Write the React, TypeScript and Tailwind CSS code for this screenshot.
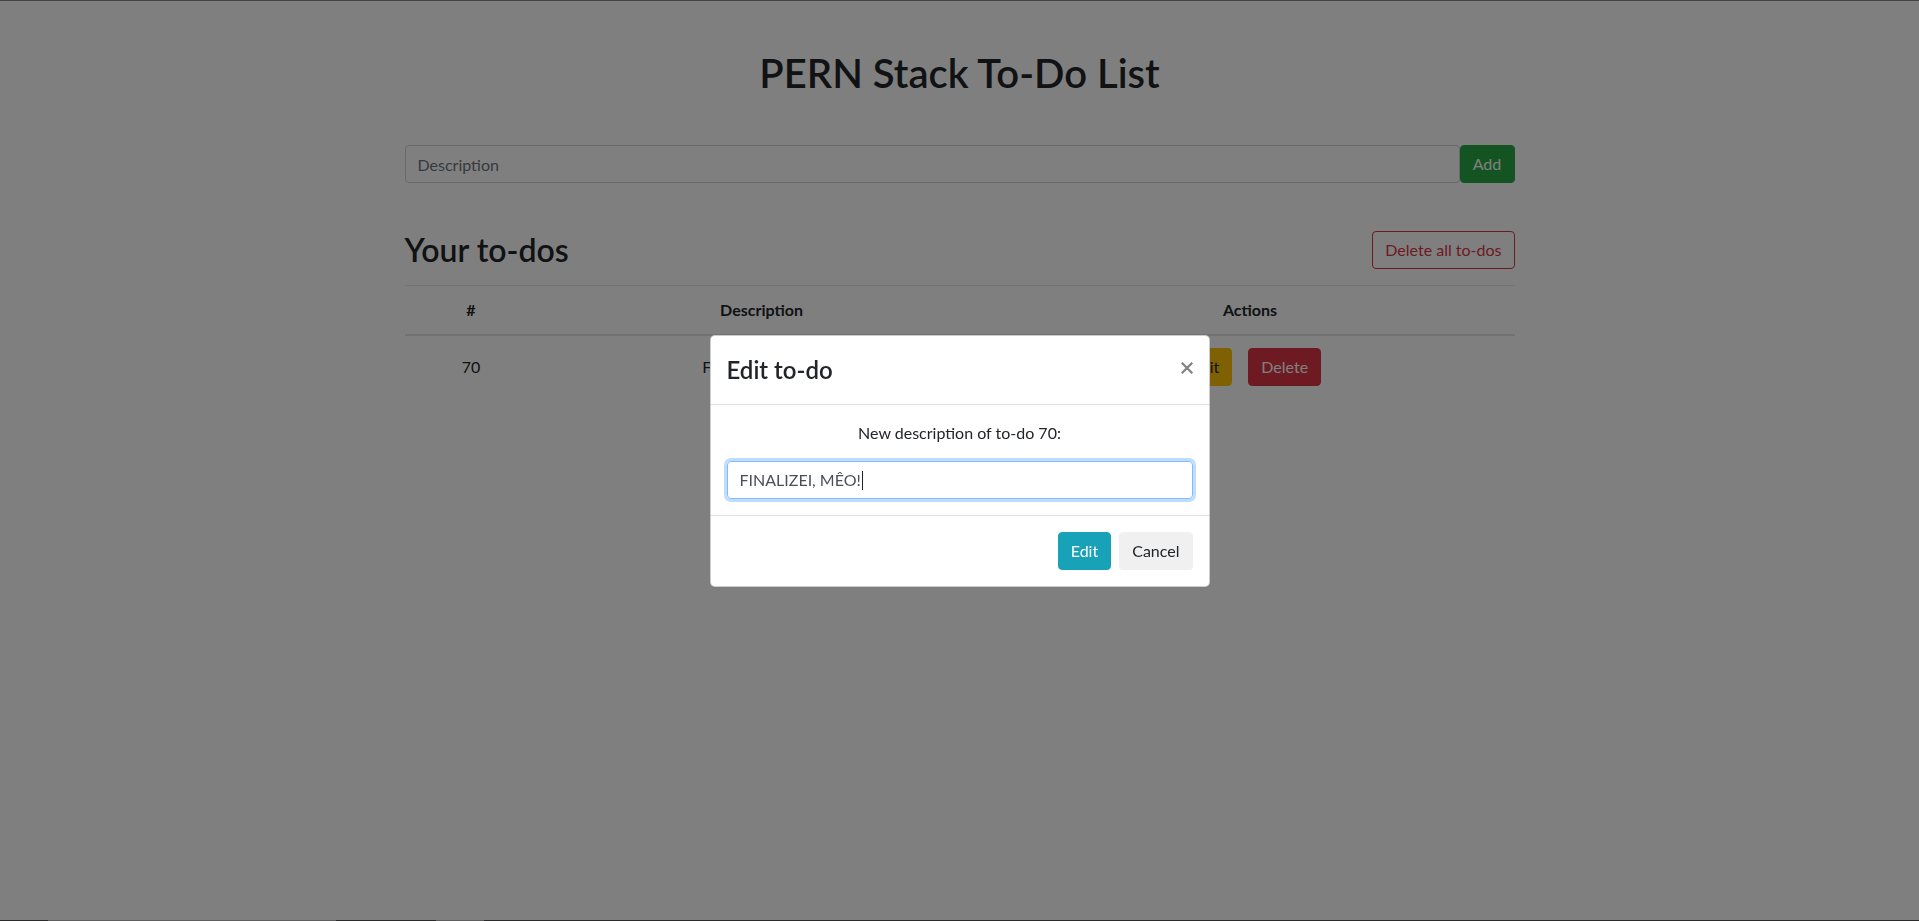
import React from "react";

const btn = "h-[38px] px-3 rounded-[4px] text-[16px] leading-[24px] border";

export default function App() {
  return (
    <div className="relative min-h-screen w-full bg-white text-[#212529] font-['Lato','Noto_Sans',sans-serif]">
      <div className="w-[1110px] mx-auto">
        <h1 className="pt-[49px] text-center text-[40px] leading-[48px] font-semibold">PERN Stack To-Do List</h1>
        <form className="flex mt-[48px]">
          <input
            className="flex-1 h-[38px] border border-[#ced4da] rounded-[4px] px-3 text-[16px] text-[#495057] placeholder:text-[#6c757d] outline-none"
            placeholder="Description"
          />
          <button type="button" className={`${btn} w-[55px] bg-[#28a745] border-[#28a745] text-white`}>Add</button>
        </form>

        <div className="flex justify-between items-center mt-[48px]">
          <h2 className="text-[32px] leading-[38px] font-semibold">Your to-dos</h2>
          <button type="button" className={`${btn} border-[#dc3545] text-[#dc3545] bg-transparent`}>Delete all to-dos</button>
        </div>

        <div className="mt-[16px] text-[16px]">
          <div className="grid grid-cols-[133px_448px_529px] border-t border-[#dee2e6] border-b-2 font-bold">
            <div className="py-3 leading-[24px] text-center">#</div>
            <div className="py-3 leading-[24px] text-center">Description</div>
            <div className="py-3 leading-[24px] text-center">Actions</div>
          </div>
          <div className="grid grid-cols-[133px_448px_529px] items-center">
            <div className="py-3 text-center leading-[24px]">70</div>
            <div className="py-3 text-center leading-[24px]">Fazer os projetos</div>
            <div className="py-3 flex justify-center gap-4">
              <button type="button" className={`${btn} bg-[#ffc107] border-[#ffc107] text-[#212529]`}>Edit</button>
              <button type="button" className={`${btn} bg-[#dc3545] border-[#dc3545] text-white`}>Delete</button>
            </div>
          </div>
        </div>
      </div>

      {/* modal backdrop + dialog */}
      <div className="fixed inset-0 bg-black/50 border-t border-[#454545] flex items-center justify-center">
        <div className="w-[500px] bg-white rounded-[5px] border border-black/20 flex flex-col">
          <div className="flex items-start px-4 py-4 border-b border-[#dee2e6]">
            <h4 className="text-[24px] leading-[36px] font-semibold">Edit to-do</h4>
            <button type="button" className="ml-auto -m-4 p-4 pt-[26px] text-[#808080]">
              <svg width="12" height="12" viewBox="0 0 12 12" fill="none" stroke="currentColor" strokeWidth="2.2" strokeLinecap="square">
                <path d="M1.5 1.5 L10.5 10.5 M10.5 1.5 L1.5 10.5" />
              </svg>
            </button>
          </div>
          <div className="p-4 flex flex-col gap-4">
            <p className="text-center text-[16px] leading-[24px]">New description of to-do 70:</p>
            <div className="h-[38px] flex items-center px-3 border border-[#80bdff] rounded-[4px] shadow-[0_0_0_3px_rgba(0,123,255,0.25)] text-[16px] text-[#495057]">
              <span>FINALIZEI, MÊO!</span>
              <span className="w-px h-[19px] bg-[#212529] ml-px" />
            </div>
          </div>
          <div className="flex justify-end items-center gap-2 px-4 py-4 border-t border-[#dee2e6]">
            <button type="button" className={`${btn} bg-[#17a2b8] border-[#17a2b8] text-white`}>Edit</button>
            <button type="button" className={`${btn} bg-[#f0f0f0] border-[#f0f0f0] text-[#212529]`}>Cancel</button>
          </div>
        </div>
      </div>
      <div className="fixed left-0 right-0 bottom-0 h-px flex">
        <div className="w-[48px] bg-[#2b2b2b]" />
        <div className="w-[288px] bg-[#5e5e5e]" />
        <div className="w-[100px] bg-[#2b2b2b]" />
        <div className="w-[48px] bg-[#5e5e5e]" />
        <div className="flex-1 bg-[#2b2b2b]" />
      </div>
    </div>
  );
}
